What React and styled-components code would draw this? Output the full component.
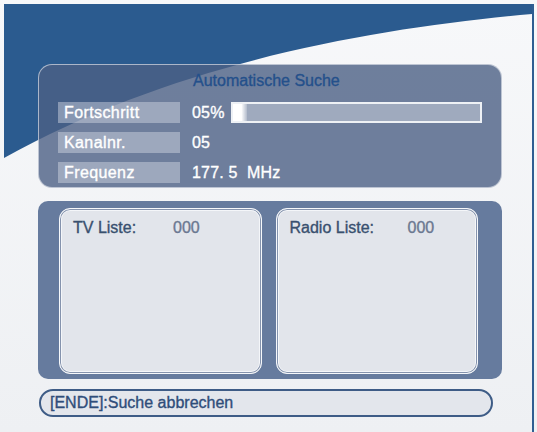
import React from "react";
import styled, { createGlobalStyle } from "styled-components";

const Global = createGlobalStyle`
  html, body {
    margin: 0;
    padding: 0;
    background: #f3f4f6;
  }
  body {
    font-family: "Liberation Sans", Arial, sans-serif;
    -webkit-text-stroke: 0.35px currentColor;
  }
`;

const Screen = styled.div`
  position: relative;
  width: 537px;
  height: 432px;
  overflow: hidden;
  background: linear-gradient(to bottom, #f7f8fa, #eef0f3);
`;

const Wave = styled.svg`
  position: absolute;
  left: 0;
  top: 0;
  z-index: 0;
`;

const Content = styled.div`
  position: relative;
  z-index: 1;
  display: flex;
  flex-direction: column;
  padding: 64px 0 0 38px;
  width: 464px;
`;

const SearchPanel = styled.div`
  box-sizing: border-box;
  height: 124px;
  border-radius: 14px;
  background: rgba(76, 96, 133, 0.8);
  border: 1px solid rgba(255, 255, 255, 0.55);
  padding: 5px 0 0 19px;
  display: flex;
  flex-direction: column;
  gap: 9px;
`;

const Title = styled.div`
  padding-left: 135px;
  font-size: 16px;
  line-height: 22px;
  color: #24508b;
  height: 22px;
  margin-bottom: 1px;
`;

const Row = styled.div`
  display: flex;
  align-items: center;
  height: 21px;
`;

const Label = styled.div`
  box-sizing: border-box;
  width: 122px;
  height: 21px;
  padding-left: 6px;
  line-height: 21px;
  font-size: 16px;
  letter-spacing: 0.4px;
  color: #fff;
  background: rgba(214, 219, 230, 0.45);
`;

const Value = styled.div`
  margin-left: 12px;
  font-size: 16px;
  color: #fff;
  white-space: pre;
  letter-spacing: 0.2px;
`;

const Bar = styled.div`
  box-sizing: border-box;
  margin-left: 6px;
  width: 251px;
  height: 21px;
  border: 2px solid #eef1f5;
  background: rgba(200, 206, 218, 0.55);
  display: flex;
`;

const Fill = styled.div`
  height: 100%;
  background: linear-gradient(to right, #ffffff 60%, rgba(255, 255, 255, 0.2));
`;

const ListPanel = styled.div`
  box-sizing: border-box;
  margin-top: 13px;
  height: 178px;
  border-radius: 10px;
  background: #667b9e;
  padding: 7px 24px 5px 21px;
  display: flex;
  gap: 14px;
`;

const Card = styled.div`
  box-sizing: border-box;
  flex: 1;
  border-radius: 11px;
  background: #e2e5eb;
  border: 1px solid #f6f8fb;
  box-shadow: inset 0 0 0 1px #8593ad, inset 0 0 0 2px #f4f6f9;
  padding: 10px 0 0 13px;
  display: flex;
  font-size: 16px;
`;

const CardLabel = styled.span`
  color: #39506f;
  width: ${(p) => p.w}px;
`;

const CardCount = styled.span`
  color: #6b7891;
`;

const HelpBar = styled.div`
  box-sizing: border-box;
  margin-top: 10px;
  margin-left: 1px;
  width: 454px;
  height: 28px;
  border-radius: 14px;
  border: 2px solid #3e5c86;
  background: #e3e6ec;
  padding-left: 9px;
  line-height: 24px;
  font-size: 16px;
  color: #2f4d7a;
`;

export default function App() {
  const progress = 5;
  return (
    <Screen>
      <Global />
      <Wave width="537" height="432" viewBox="0 0 537 432">
        <path d="M4 4 H532 V14 C380 28 180 60 4 158 Z" fill="#2b5b8f" />
        <rect x="532" y="4" width="2" height="428" fill="#2f5e92" />
      </Wave>
      <Content>
        <SearchPanel>
          <Title>Automatische Suche</Title>
          <Row>
            <Label>Fortschritt</Label>
            <Value>05%</Value>
            <Bar>
              <Fill style={{ width: `${progress * 1.2}%` }} />
            </Bar>
          </Row>
          <Row>
            <Label>Kanalnr.</Label>
            <Value>05</Value>
          </Row>
          <Row>
            <Label>Frequenz</Label>
            <Value>{"177. 5  MHz"}</Value>
          </Row>
        </SearchPanel>
        <ListPanel>
          <Card>
            <CardLabel w={100}>TV Liste:</CardLabel>
            <CardCount>000</CardCount>
          </Card>
          <Card>
            <CardLabel w={118}>Radio Liste:</CardLabel>
            <CardCount>000</CardCount>
          </Card>
        </ListPanel>
        <HelpBar>[ENDE]:Suche abbrechen</HelpBar>
      </Content>
    </Screen>
  );
}
